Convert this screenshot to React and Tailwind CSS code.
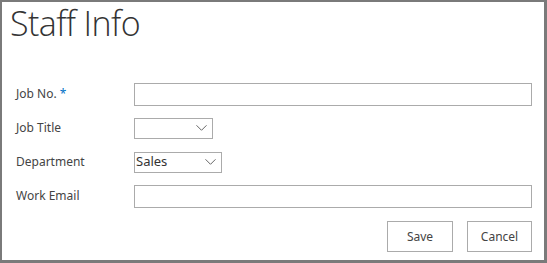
import React, { useState } from 'react';

const Chevron = () => (
  <svg width="11" height="7" viewBox="0 0 11 7" className="absolute right-[5px] top-1/2 -translate-y-1/2 pointer-events-none">
    <path d="M0.5 0.8 L5.5 5.8 L10.5 0.8" fill="none" stroke="#666" strokeWidth="1" />
  </svg>
);

const Row = ({ label, required, children }) => (
  <div className="flex items-center h-[34px]">
    <label className="w-[118px] shrink-0 text-[12px] text-[#444]">
      {label}
      {required && <span className="text-[#0072c6]"> *</span>}
    </label>
    {children}
  </div>
);

const App = () => {
  const [jobNo, setJobNo] = useState('');
  const [email, setEmail] = useState('');

  return (
    <div
      className="w-[547px] h-[263px] bg-white border-[#7a7a7a] border-l-2 border-t-2 border-r-[3px] border-b-[3px] flex flex-col"
      style={{ fontFamily: '"Noto Sans", "Open Sans", sans-serif' }}
    >
      <div className="h-[75px] pl-[8px]">
        <h1
          className="text-[34px] leading-[42px] font-light text-[#333] tracking-[-0.6px]"
          style={{ fontFamily: '"Open Sans", "Noto Sans", sans-serif' }}
        >
          Staff Info
        </h1>
      </div>
      <div className="pl-[14px] pr-[12px]">
        <Row label="Job No." required>
          <input
            value={jobNo}
            onChange={(e) => setJobNo(e.target.value)}
            className="w-[398px] h-[23px] border border-[#ababab] outline-none px-1 text-[13px]"
          />
        </Row>
        <Row label="Job Title">
          <div className="relative w-[79px] h-[21px] border border-[#ababab]">
            <Chevron />
          </div>
        </Row>
        <Row label="Department">
          <div className="relative w-[88px] h-[21px] border border-[#ababab] flex items-center pl-[1px] text-[13px] text-[#333]">
            Sales
            <Chevron />
          </div>
        </Row>
        <Row label="Work Email">
          <input
            value={email}
            onChange={(e) => setEmail(e.target.value)}
            className="w-[398px] h-[23px] border border-[#ababab] outline-none px-1 text-[13px]"
          />
        </Row>
        <div className="flex justify-end gap-[14px] mt-[8px]">
          <button className="w-[66px] h-[31px] border border-[#ababab] bg-white text-[12px] text-[#444]">Save</button>
          <button className="w-[65px] h-[31px] border border-[#ababab] bg-white text-[12px] text-[#444]">Cancel</button>
        </div>
      </div>
    </div>
  );
};

export default App;
